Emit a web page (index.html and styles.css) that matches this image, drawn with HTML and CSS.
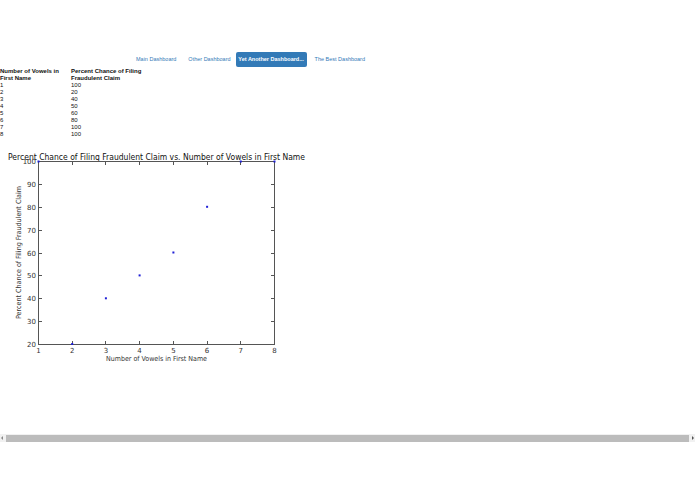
FILE: index.html
```html
<!DOCTYPE html>
<html>
<head>
<meta charset="utf-8">
<link rel="stylesheet" href="styles.css">
</head>
<body>
<nav class="nav">
  <a class="nav-link">Main Dashboard</a>
  <a class="nav-link">Other Dashboard</a>
  <a class="nav-btn">Yet Another Dashboard...</a>
  <a class="nav-link">The Best Dashboard</a>
</nav>
<table class="data">
  <thead>
    <tr><th class="c1">Number of Vowels in First Name</th><th class="c2">Percent Chance of Filing Fraudulent Claim</th></tr>
  </thead>
  <tbody>
    <tr><td>1</td><td>100</td></tr>
    <tr><td>2</td><td>20</td></tr>
    <tr><td>3</td><td>40</td></tr>
    <tr><td>4</td><td>50</td></tr>
    <tr><td>5</td><td>60</td></tr>
    <tr><td>6</td><td>80</td></tr>
    <tr><td>7</td><td>100</td></tr>
    <tr><td>8</td><td>100</td></tr>
  </tbody>
</table>
<svg class="chart" width="310" height="220" viewBox="0 0 310 220">
  <text class="title" x="8" y="11.5" textLength="297" lengthAdjust="spacingAndGlyphs">Percent Chance of Filing Fraudulent Claim vs. Number of Vowels in First Name</text>
  <rect x="38.5" y="13.5" width="236" height="183" fill="none" stroke="#555" stroke-width="1" shape-rendering="crispEdges"/>
  <g stroke="#555" stroke-width="1" shape-rendering="crispEdges">
    <line x1="72.2" y1="196" x2="72.2" y2="193"/><line x1="72.2" y1="14" x2="72.2" y2="17"/>
    <line x1="105.9" y1="196" x2="105.9" y2="193"/><line x1="105.9" y1="14" x2="105.9" y2="17"/>
    <line x1="139.6" y1="196" x2="139.6" y2="193"/><line x1="139.6" y1="14" x2="139.6" y2="17"/>
    <line x1="173.4" y1="196" x2="173.4" y2="193"/><line x1="173.4" y1="14" x2="173.4" y2="17"/>
    <line x1="207.1" y1="196" x2="207.1" y2="193"/><line x1="207.1" y1="14" x2="207.1" y2="17"/>
    <line x1="240.8" y1="196" x2="240.8" y2="193"/><line x1="240.8" y1="14" x2="240.8" y2="17"/>
    <line x1="39" y1="36.4" x2="42" y2="36.4"/><line x1="274" y1="36.4" x2="271" y2="36.4"/>
    <line x1="39" y1="59.3" x2="42" y2="59.3"/><line x1="274" y1="59.3" x2="271" y2="59.3"/>
    <line x1="39" y1="82.1" x2="42" y2="82.1"/><line x1="274" y1="82.1" x2="271" y2="82.1"/>
    <line x1="39" y1="105" x2="42" y2="105"/><line x1="274" y1="105" x2="271" y2="105"/>
    <line x1="39" y1="127.9" x2="42" y2="127.9"/><line x1="274" y1="127.9" x2="271" y2="127.9"/>
    <line x1="39" y1="150.8" x2="42" y2="150.8"/><line x1="274" y1="150.8" x2="271" y2="150.8"/>
    <line x1="39" y1="173.6" x2="42" y2="173.6"/><line x1="274" y1="173.6" x2="271" y2="173.6"/>
  </g>
  <g class="ticklabel" text-anchor="end">
    <text x="36" y="16">100</text>
    <text x="36" y="38.9">90</text>
    <text x="36" y="61.8">80</text>
    <text x="36" y="84.6">70</text>
    <text x="36" y="107.5">60</text>
    <text x="36" y="130.4">50</text>
    <text x="36" y="153.3">40</text>
    <text x="36" y="176.1">30</text>
    <text x="36" y="199">20</text>
  </g>
  <g class="ticklabel" text-anchor="middle">
    <text x="38.5" y="204.5">1</text>
    <text x="72.2" y="204.5">2</text>
    <text x="105.9" y="204.5">3</text>
    <text x="139.6" y="204.5">4</text>
    <text x="173.4" y="204.5">5</text>
    <text x="207.1" y="204.5">6</text>
    <text x="240.8" y="204.5">7</text>
    <text x="274.5" y="204.5">8</text>
  </g>
  <text class="axislabel" x="156.5" y="213" text-anchor="middle" textLength="101" lengthAdjust="spacingAndGlyphs">Number of Vowels in First Name</text>
  <text class="axislabel" text-anchor="middle" transform="translate(21 104.5) rotate(-90)" textLength="133" lengthAdjust="spacingAndGlyphs">Percent Chance of Filing Fraudulent Claim</text>
  <g fill="#1f1fd6">
    <rect x="37.5" y="12.5" width="2" height="2"/>
    <rect x="71.2" y="195" width="2" height="2"/>
    <rect x="104.9" y="149.3" width="2" height="2"/>
    <rect x="138.6" y="126.4" width="2" height="2"/>
    <rect x="172.4" y="103.5" width="2" height="2"/>
    <rect x="206.1" y="57.8" width="2" height="2"/>
    <rect x="239.8" y="12.5" width="2" height="2"/>
    <rect x="273.5" y="12.5" width="2" height="2"/>
  </g>
</svg>
<div class="hscroll">
  <span class="arrow arrow-left"></span>
  <div class="thumb"></div>
  <span class="arrow arrow-right"></span>
</div>
</body>
</html>
```

FILE: styles.css
```css
html, body {
  margin: 0;
  padding: 0;
  background: #fff;
}
body {
  width: 695px;
  height: 494px;
  overflow: hidden;
  font-family: "Liberation Sans", Arial, sans-serif;
  color: #222;
}
.nav {
  display: flex;
  align-items: center;
  padding: 52px 0 0 130px;
  height: 15px;
  font-size: 5.5px;
}
.nav-link {
  color: #337ab7;
  padding: 0 6px;
  line-height: 15px;
  white-space: nowrap;
}
.nav-btn {
  margin-left: -1px;
  margin-right: 2px;
  background: #337ab7;
  color: #fff;
  font-weight: bold;
  width: 71px;
  height: 15px;
  line-height: 15px;
  text-align: center;
  border-radius: 2px;
  white-space: nowrap;
}
.data {
  border-collapse: collapse;
  font-size: 6px;
  line-height: 7px;
  margin-top: 1px;
  color: #111;
}
.data th {
  font-weight: bold;
  text-align: left;
  vertical-align: top;
  padding: 0;
}
.data td {
  padding: 0;
}
.data .c1 {
  width: 62px;
  padding-right: 9px;
}
.data .c2 {
  width: 80px;
}
.chart {
  display: block;
  margin-top: 10px;
}
.title {
  font-family: "DejaVu Sans", sans-serif;
  font-size: 8px;
  fill: #111;
}
.ticklabel {
  font-family: "DejaVu Sans", sans-serif;
  font-size: 7px;
  fill: #333;
}
.axislabel {
  font-family: "DejaVu Sans", sans-serif;
  font-size: 7px;
  fill: #333;
}
.hscroll {
  margin-top: 66px;
  height: 8px;
  background: #f1f1f1;
  display: flex;
  align-items: center;
}
.thumb {
  flex: 1;
  height: 7px;
  margin: 0 2px;
  background: #bcbcbc;
}
.arrow {
  width: 4px;
  height: 8px;
  position: relative;
}
.arrow-left::after {
  content: "";
  position: absolute;
  left: 1px;
  top: 2px;
  border-style: solid;
  border-width: 2px 2px 2px 0;
  border-color: transparent #888 transparent transparent;
}
.arrow-right::after {
  content: "";
  position: absolute;
  right: 1px;
  top: 2px;
  border-style: solid;
  border-width: 2px 0 2px 2px;
  border-color: transparent transparent transparent #555;
}
```
